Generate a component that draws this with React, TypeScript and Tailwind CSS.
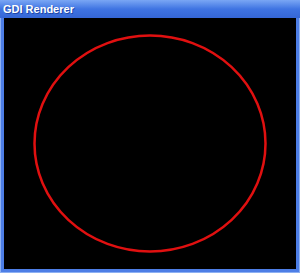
export default function App() {
  return (
    <div className="flex h-[273px] w-[300px] flex-col bg-[#3d6ee0] font-['Liberation_Sans',sans-serif]">
      <div className="flex h-[18px] shrink-0 items-center bg-gradient-to-b from-[#7aa6f4] via-[#3f74e2] to-[#3566d6] pl-[3px]">
        <span className="text-[11px] font-bold leading-none text-white [text-shadow:1px_1px_0_#1f47a8]">GDI Renderer</span>
      </div>
      <div className="flex flex-1 border-x-[1px] border-b-[1px] border-[#8db0f2] bg-[#4d7ee6]">
        <div className="m-[0_3px_3px_3px] flex flex-1 border-x-[0px] bg-black">
          <svg width="292" height="251" viewBox="0 0 292 251" className="block">
            <ellipse cx="146" cy="125.5" rx="115.5" ry="108" fill="none" stroke="#e01010" strokeWidth="2.5" />
          </svg>
        </div>
      </div>
    </div>
  );
}
